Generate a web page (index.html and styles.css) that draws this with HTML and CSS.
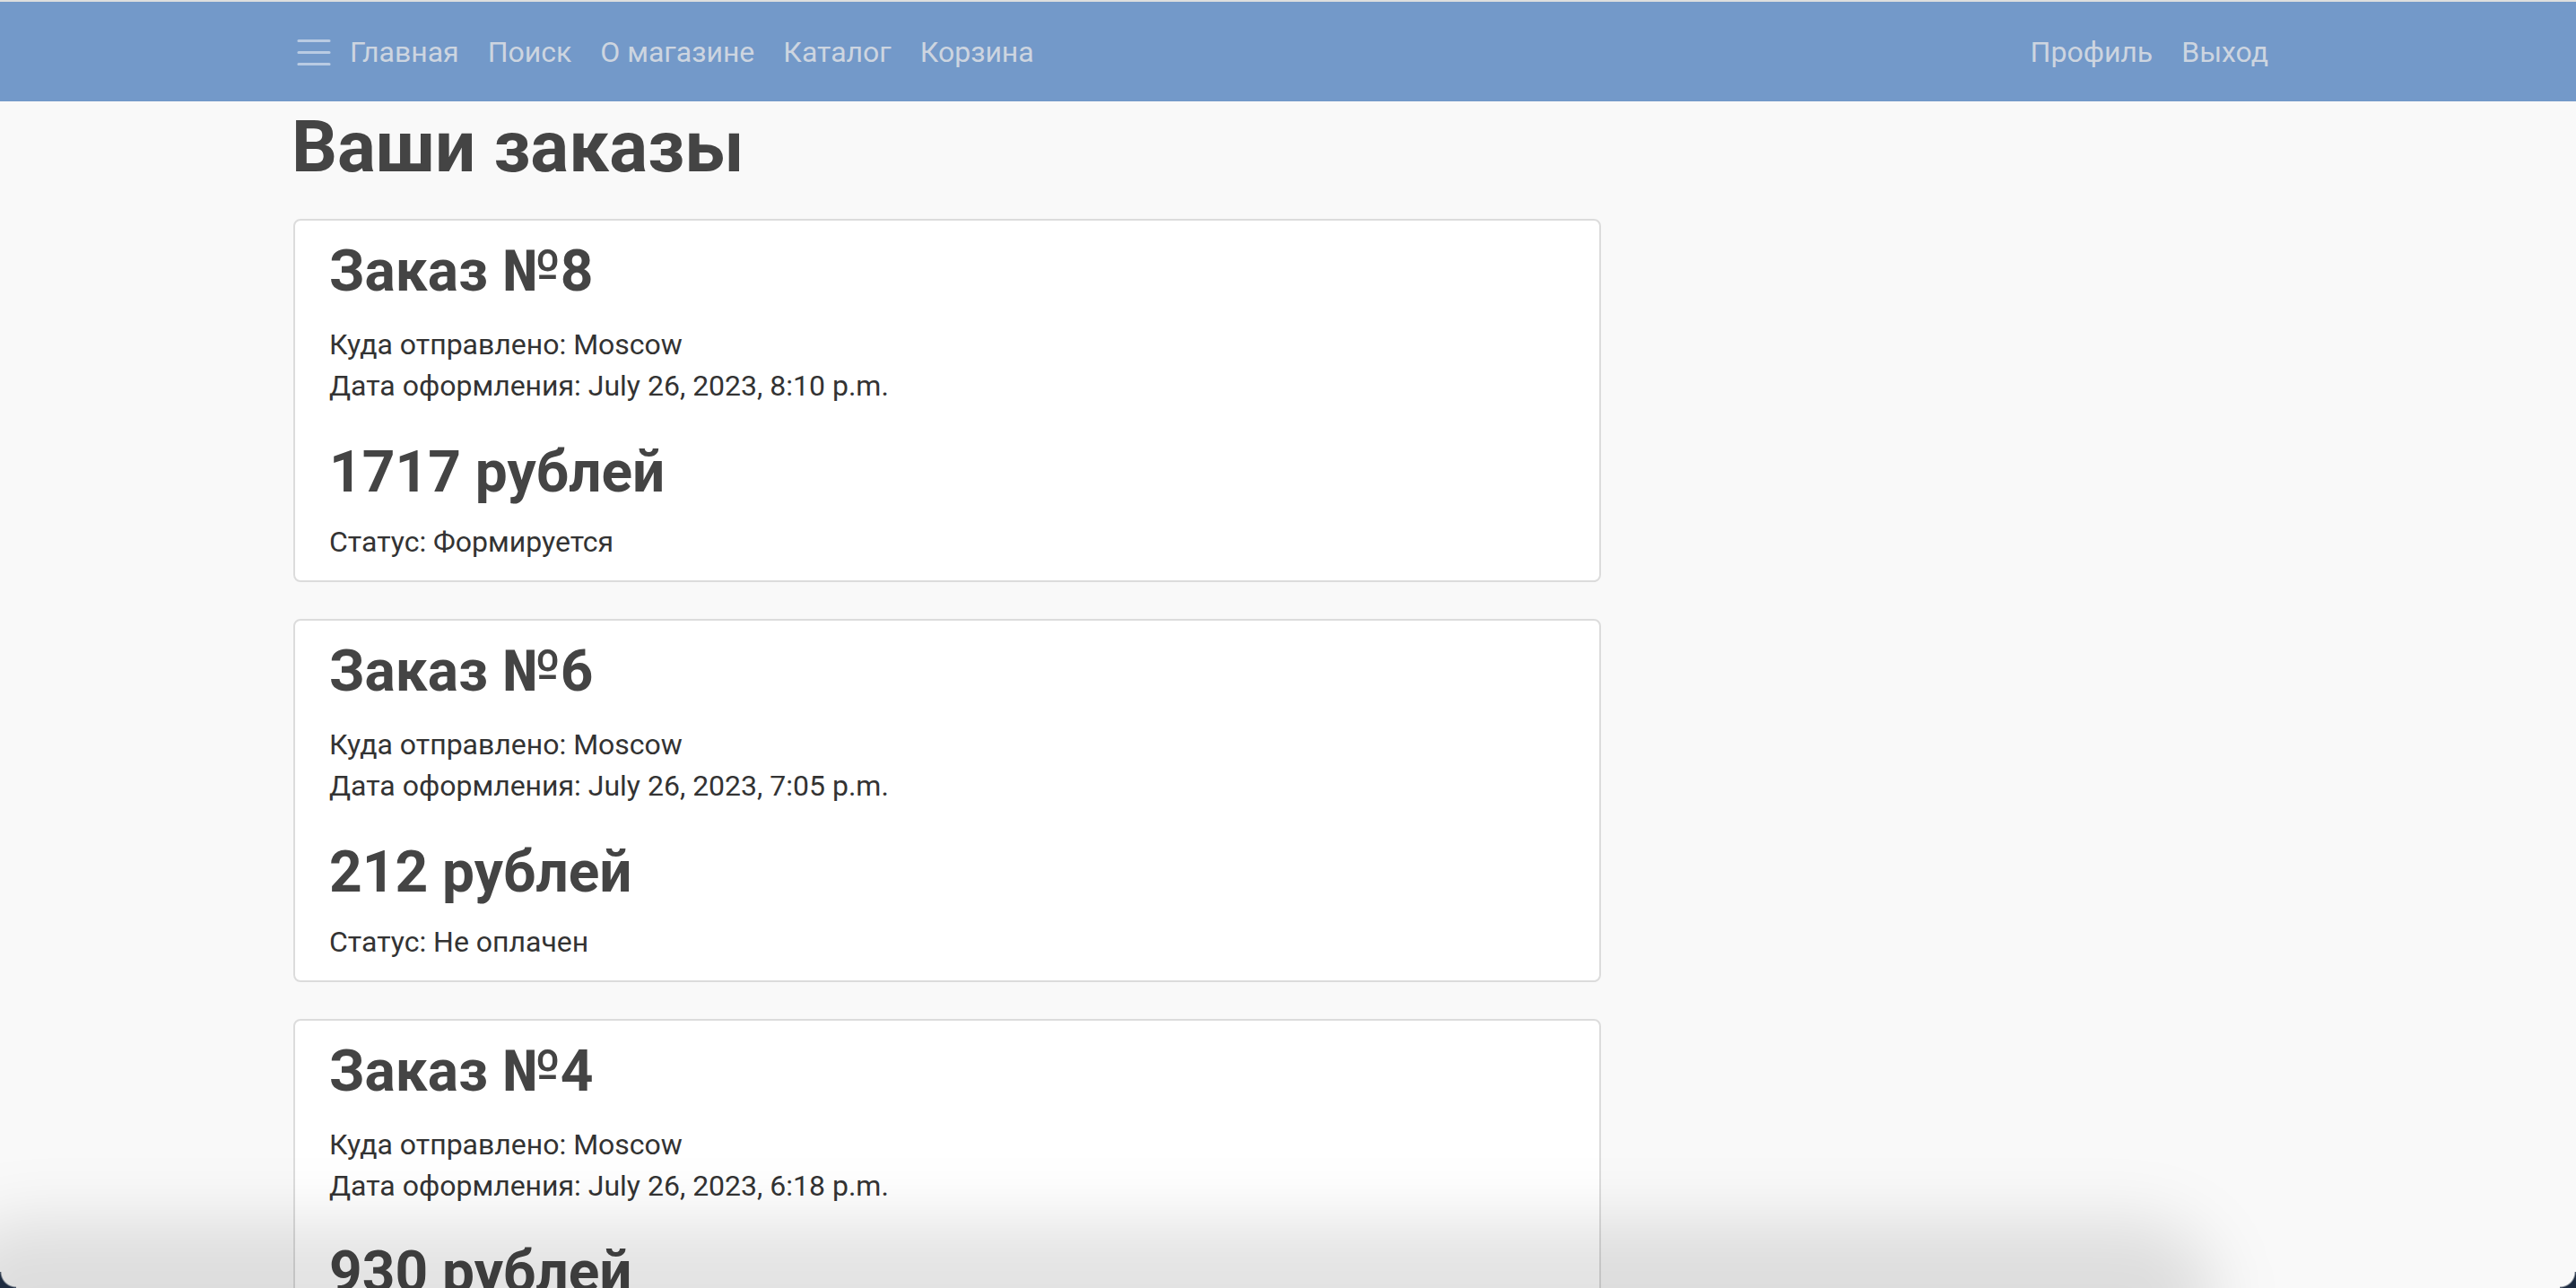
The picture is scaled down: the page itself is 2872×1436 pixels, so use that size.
FILE: index.html
```html
<!DOCTYPE html>
<html lang="ru">
<head>
<meta charset="utf-8">
<title>Ваши заказы</title>
<link rel="stylesheet" href="styles.css">
</head>
<body>
<div class="topline"></div>
<nav class="navbar">
  <div class="nav-inner">
    <div class="nav-left">
      <button class="toggler" aria-label="menu">
        <svg width="38" height="30" viewBox="0 0 38 30">
          <path d="M2 2.5H36M2 15.5H36M2 28.5H36" stroke="#b9cbe3" stroke-width="3.2" stroke-linecap="round" fill="none"/>
        </svg>
      </button>
      <a class="nav-link" href="#">Главная</a>
      <a class="nav-link" href="#">Поиск</a>
      <a class="nav-link" href="#">О магазине</a>
      <a class="nav-link" href="#">Каталог</a>
      <a class="nav-link" href="#">Корзина</a>
    </div>
    <div class="nav-right">
      <a class="nav-link" href="#">Профиль</a>
      <a class="nav-link" href="#">Выход</a>
    </div>
  </div>
</nav>
<main class="container">
  <h1 class="page-title">Ваши заказы</h1>
  <div class="orders">
    <div class="card">
      <h2 class="card-title">Заказ №8</h2>
      <p class="info">Куда отправлено: Moscow<br>Дата оформления: July 26, 2023, 8:10 p.m.</p>
      <h2 class="price">1717 рублей</h2>
      <p class="status">Статус: Формируется</p>
    </div>
    <div class="card">
      <h2 class="card-title">Заказ №6</h2>
      <p class="info">Куда отправлено: Moscow<br>Дата оформления: July 26, 2023, 7:05 p.m.</p>
      <h2 class="price">212 рублей</h2>
      <p class="status">Статус: Не оплачен</p>
    </div>
    <div class="card">
      <h2 class="card-title">Заказ №4</h2>
      <p class="info">Куда отправлено: Moscow<br>Дата оформления: July 26, 2023, 6:18 p.m.</p>
      <h2 class="price">930 рублей</h2>
      <p class="status">Статус: Не оплачен</p>
    </div>
  </div>
</main>
<div class="bottom-shade"></div>
<div class="corner corner-left"></div>
<div class="corner corner-right"></div>
</body>
</html>
```
FILE: styles.css
```css
html, body {
  margin: 0;
  padding: 0;
}
body {
  background: #f9f9f9;
  font-family: Roboto, "Liberation Sans", sans-serif;
  color: #333;
  overflow: hidden;
  height: 1436px;
}
.topline {
  height: 2px;
  background: #dedede;
}
.navbar {
  background: #7399c9;
  height: 111px;
  display: flex;
  align-items: center;
}
.nav-inner {
  width: 2218px;
  margin: 0 auto;
  display: flex;
  justify-content: space-between;
  align-items: center;
}
.nav-left, .nav-right {
  display: flex;
  align-items: center;
}
.toggler {
  background: none;
  border: 0;
  padding: 0 5px 0 4px;
  margin: 0;
  display: flex;
  align-items: center;
  cursor: pointer;
}
.toggler svg {
  display: block;
}
.nav-link {
  font-size: 32px;
  line-height: 48px;
  color: #cdd5e0;
  text-decoration: none;
  padding: 0 16px;
}
.container {
  width: 2218px;
  margin: 0 auto;
}
.page-title {
  margin: 3px 0 32px;
  font-size: 80px;
  line-height: 96px;
  font-weight: 700;
  color: #444;
  margin-left: -2px;
}
.orders {
  display: flex;
  flex-direction: column;
  gap: 41px;
}
.card {
  width: 1458px;
  box-sizing: border-box;
  background: #fff;
  border: 2px solid #dcdcdc;
  border-radius: 8px;
  padding: 18px 38px 20px 38px;
}
.card-title, .price {
  margin: 0;
  font-size: 64px;
  line-height: 77px;
  font-weight: 700;
  color: #444;
}
.card-title {
  margin-bottom: 20px;
}
.info {
  margin: 0 0 35px;
  font-size: 32px;
  line-height: 46px;
  color: #333;
}
.price {
  margin-bottom: 16px;
}
.status {
  margin: 0;
  font-size: 32px;
  line-height: 46px;
  color: #333;
}
.bottom-shade {
  position: fixed;
  left: -60px;
  bottom: -95px;
  width: 2530px;
  height: 170px;
  border-radius: 90px;
  background: rgba(0, 0, 0, 0.11);
  filter: blur(36px);
  pointer-events: none;
}
.corner {
  position: fixed;
  bottom: 0;
  width: 18px;
  height: 18px;
  pointer-events: none;
}
.corner-left {
  left: 0;
  background: radial-gradient(circle at 100% 0, transparent 16px, #1d2b40 18px);
}
.corner-right {
  right: 0;
  background: radial-gradient(circle at 0 0, transparent 16px, #1d2b40 18px);
}
```
